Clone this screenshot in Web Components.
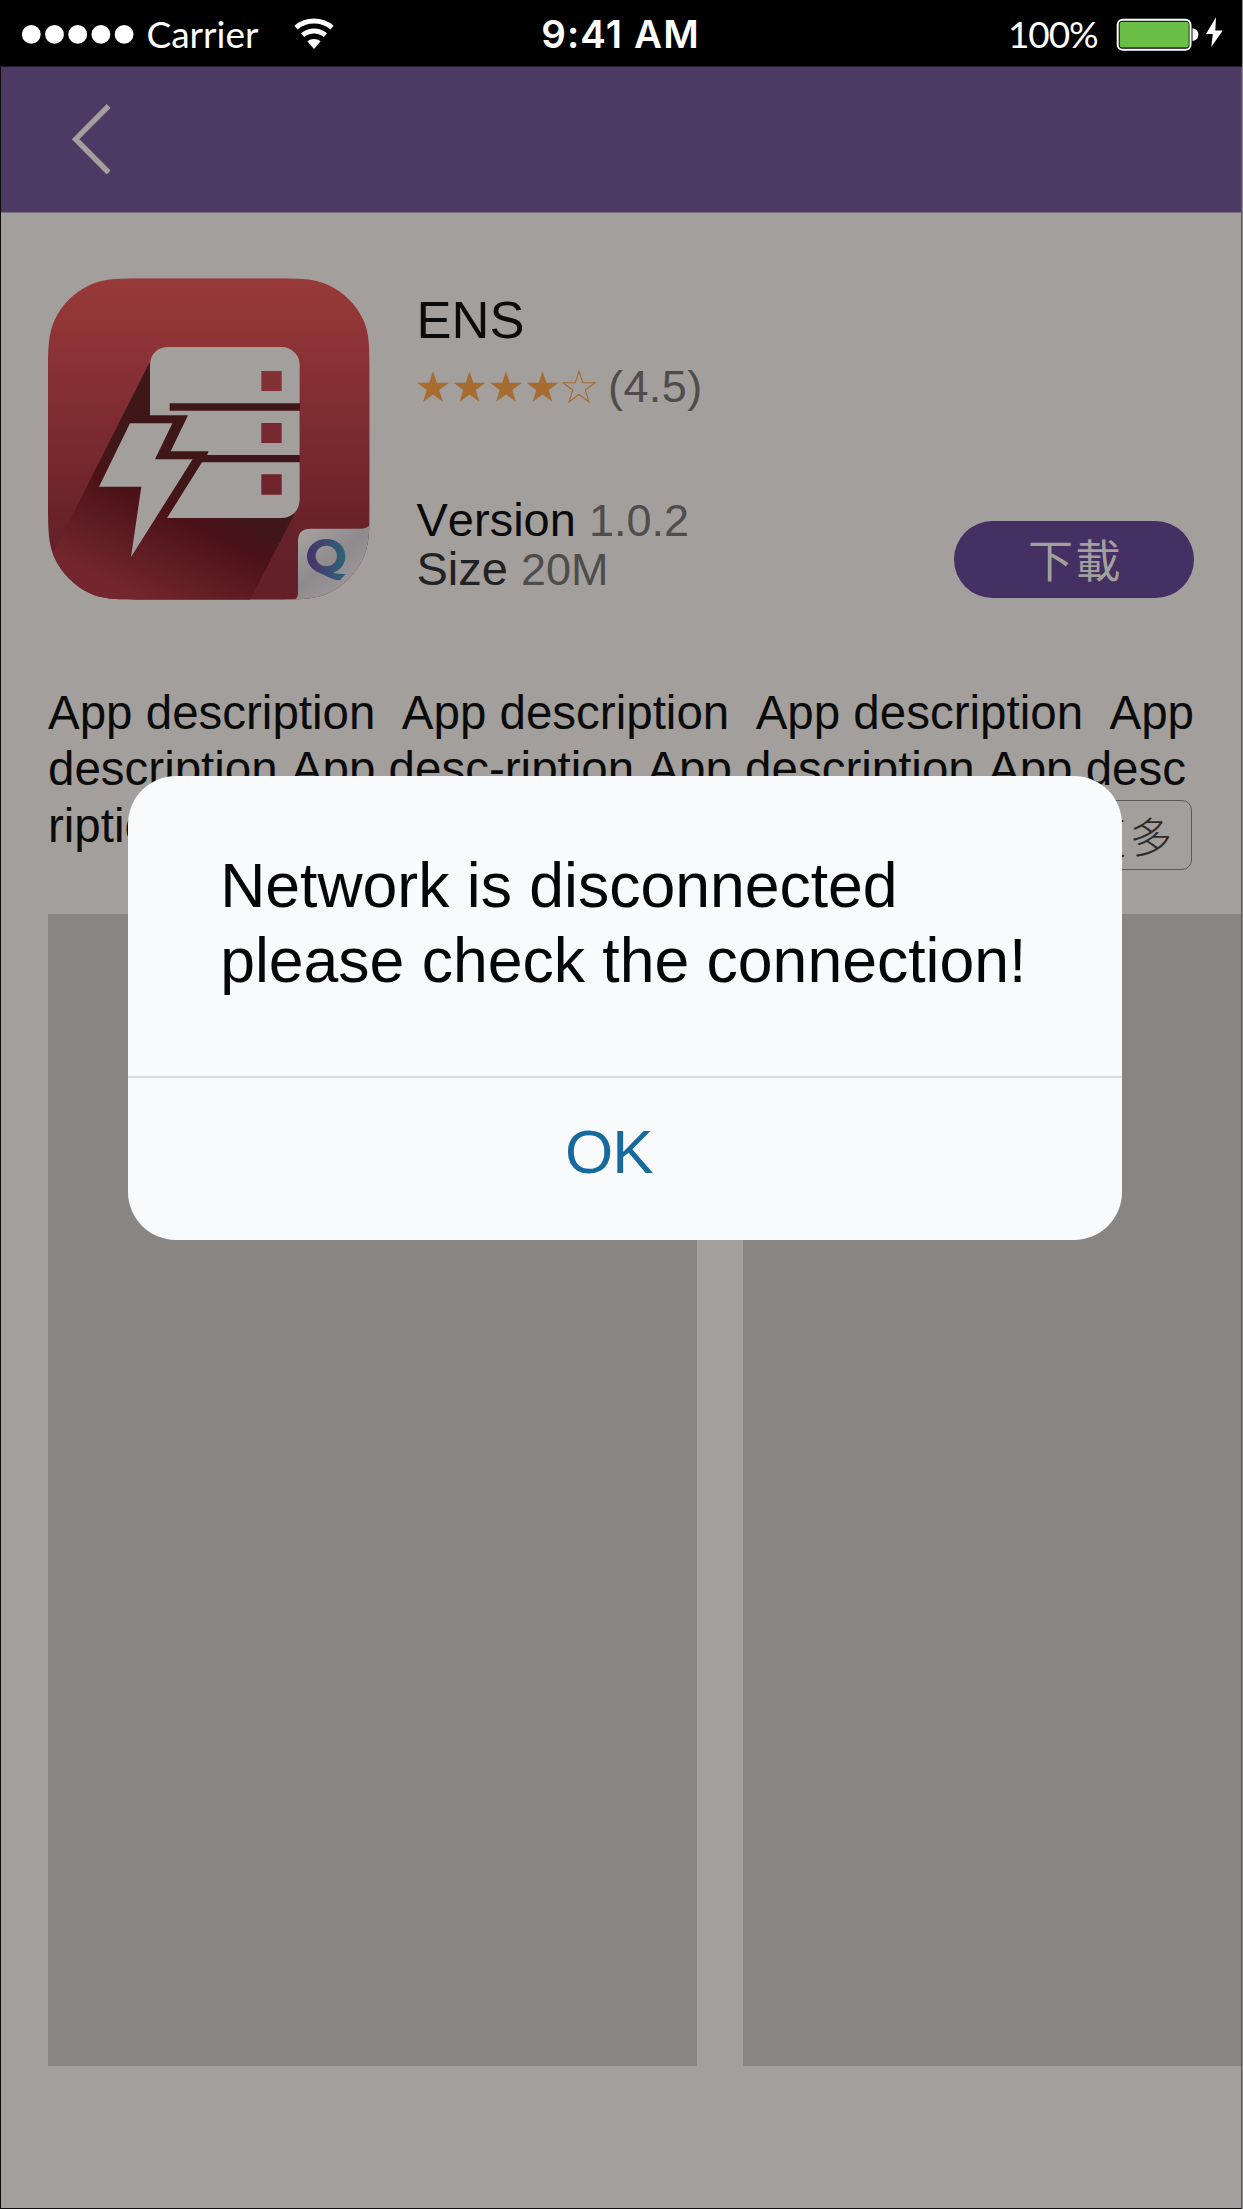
<!DOCTYPE html>
<html lang="zh-Hant">
<head>
<meta charset="utf-8">
<title>ENS</title>
<style>
html,body{margin:0;padding:0;background:#8b8989}
body{font-family:"Liberation Sans",Arial,sans-serif;overflow:hidden}
</style>
</head>
<body>
<app-screen>
  <status-bar slot="status" carrier="Carrier" time="9:41 AM" battery="100%"></status-bar>
  <nav-bar slot="nav"></nav-bar>
  <app-summary name="ENS" rating="(4.5)" version="1.0.2" size="20M">
    <app-icon slot="icon"></app-icon>
    <pill-button slot="action">下載</pill-button>
  </app-summary>
  <app-description>
    <span>App description&nbsp; App description&nbsp; App description&nbsp; App</span>
    <span>description App desc-ription App description App desc</span>
    <span slot="last">ription</span>
    <more-button slot="more">更多</more-button>
  </app-description>
  <shot-gallery></shot-gallery>
  <alert-dialog slot="dialog">
    <span>Network is disconnected<br>please check the connection!</span>
    <span slot="action">OK</span>
  </alert-dialog>
</app-screen>
<script>
const define = (name, html, setup) => customElements.define(name, class extends HTMLElement {
  constructor() {
    super();
    this.attachShadow({mode: 'open'}).innerHTML = html;
  }
  connectedCallback() { if (setup) setup(this, this.shadowRoot); }
});
const fill = (host, root, keys) => keys.forEach(k => { root.getElementById(k).textContent = host.getAttribute(k); });

define('app-screen', `
<style>
:host{display:flex;flex-direction:column;position:relative;width:1242px;height:2209px;box-sizing:border-box;background:#a29f9d;overflow:hidden}
main{flex:1;display:flex;flex-direction:column;border:solid #0d0b0c;border-width:0 1px 1px 1px;border-right-color:#5b5959;box-sizing:border-box}
</style>
<slot name="status"></slot>
<main><slot name="nav"></slot><slot></slot></main>
<slot name="dialog"></slot>`);

define('status-bar', `
<style>
:host{display:flex;height:66px;background:#000;color:#fff;border-bottom:1px solid #221b2e;flex:none}
.side{flex:1;display:flex;align-items:center}
.left{padding-left:22px}
.right{justify-content:flex-end;padding-right:19px}
span{white-space:nowrap}
.sys{font:37px/66px Lato,"Open Sans",sans-serif}
#carrier{margin-left:12.5px;letter-spacing:0;width:110px;padding-top:1px}
#battery{width:90px;margin-right:18px;letter-spacing:-1.1px;padding-top:2px}
#time{font:600 38.5px/66px Inter,sans-serif;letter-spacing:1.1px;padding-top:1px;margin-right:4px}
svg{display:block;flex:none}
.wifi{margin-left:37.5px}
</style>
<div class="side left">
<svg width="112" height="66" viewBox="22 0 112 66" fill="#fff"><circle cx="31.3" cy="34.4" r="9.4"/><circle cx="54.5" cy="34.4" r="9.4"/><circle cx="77.7" cy="34.4" r="9.4"/><circle cx="100.9" cy="34.4" r="9.4"/><circle cx="124.1" cy="34.4" r="9.4"/></svg>
<span id="carrier" class="sys"></span>
<svg class="wifi" width="40" height="66" viewBox="294.3 0 40 66" fill="none" stroke="#fff" stroke-width="4.9"><path d="M296.3 27.6A28 28 0 0 1 332.3 27.6M302.9 35.2A17.6 17.6 0 0 1 325.7 35.2"/><path d="M314.3 48.9L307.7 41.3A10.2 10.2 0 0 1 320.9 41.3Z" fill="#fff" stroke="none"/></svg>
</div>
<span id="time"></span>
<div class="side right">
<span id="battery" class="sys"></span>
<svg width="107" height="66" viewBox="1116 0 107 66"><rect x="1117.7" y="19.7" width="72.8" height="30" rx="5" fill="#000" stroke="#fff" stroke-width="2"/><rect x="1119.7" y="21.8" width="69" height="25.6" rx="2.5" fill="#69be45"/><path d="M1192.5 28.2Q1198.4 29 1198.4 34.6T1192.5 41Z" fill="#fff"/><path d="M1216 17.2L1206 34H1212.8L1211.3 47L1222.8 30.4H1215.3Z" fill="#fff"/></svg>
</div>`, (h, r) => fill(h, r, ['carrier', 'time', 'battery']));

define('nav-bar', `
<style>:host{display:flex;align-items:flex-start;height:145px;flex:none;background:#4c3a65;padding-left:70px;border-bottom:1px solid #7e7386}svg{margin-top:34px}</style>
<svg width="42" height="78" viewBox="71 101 42 78" fill="none" stroke="#a29f9d" stroke-width="5.4"><path d="M108.6 106L75.6 139.2L108.6 172.5"/></svg>`);

define('app-icon', `
<style>:host,svg{display:block;width:322px;height:322px}</style>
<svg viewBox="54 54 966 966">
<defs>
<linearGradient id="bg" gradientUnits="userSpaceOnUse" x1="0" y1="54" x2="0" y2="1019"><stop offset="0" stop-color="#983939"/><stop offset=".1" stop-color="#943637"/><stop offset=".8" stop-color="#66212a"/><stop offset="1" stop-color="#642029"/></linearGradient>
<linearGradient id="sh" gradientUnits="userSpaceOnUse" x1="0" y1="0" x2="-450" y2="890"><stop offset=".4" stop-color="#401719"/><stop offset=".49" stop-color="#4b1218"/><stop offset=".76" stop-color="#73262f"/></linearGradient>
<linearGradient id="fold" gradientUnits="userSpaceOnUse" x1="810" y1="810" x2="960" y2="990"><stop offset=".1" stop-color="#a19e9d"/><stop offset=".55" stop-color="#8f8b8d"/><stop offset="1" stop-color="#9b989b"/></linearGradient>
<linearGradient id="q"><stop offset="0" stop-color="#45326a"/><stop offset=".5" stop-color="#3d4a75"/><stop offset="1" stop-color="#2d6374"/></linearGradient>
<clipPath id="c"><path d="M54 330C54 250 58 215 75 178C95 135 135 95 178 76C215 58 250 55 330 55H744C824 55 859 58 896 76C939 95 979 135 999 178C1016 215 1019 250 1019 330V744C1019 824 1016 859 999 896C979 939 939 979 896 999C859 1016 824 1019 744 1019H330C250 1019 215 1016 178 999C135 979 95 939 75 896C58 859 54 824 54 744Z"/></clipPath>
</defs>
<g clip-path="url(#c)">
<path d="M54 54H1020V1020H54Z" fill="url(#bg)"/>
<path d="M358 308L60 898V1020H660L792 765L810 430Z" fill="url(#sh)"/>
<path d="M400 420H809V620H420L300 600V450Z" fill="#401719"/>
<g fill="#a29f9d">
<path d="M360 315Q360 289 376 275Q391 261 415 261H754Q777 261 793 277Q809 292 809 315V430H419V452H809V585H531L536 574H422L474 466H360Z"/>
<path d="M516 607H809V720Q809 743 793 759Q777 774 754 774H411Z"/>
<path d="M300 490H427L375 598H488L303 891L334 680H207Z"/>
</g>
<path d="M694 333H755V393H694Z" fill="#823034"/><path d="M694 489H755V549H694Z" fill="#772830"/><path d="M694 643H755V704H694Z" fill="#6d242c"/>
<path d="M1020 795Q1010 806 992 806H841Q804 806 804 843V995Q804 1013 793 1020H1020Z" fill="url(#fold)"/>
</g>
<path fill-rule="evenodd" fill="url(#q)" d="M889 837C922 837 946 860 946 889C946 913 931 931 910 938C921 942 934 941 947 942L930 961C901 958 890 947 868 938C846 930 831 912 831 889C831 860 856 837 889 837ZM889 857C871 857 857 871 857 888S871 919 889 919S921 905 921 888S907 857 889 857Z"/>
</svg>`);

define('pill-button', `
<style>:host{display:flex;justify-content:center;align-items:center;width:240.5px;height:76.5px;border-radius:39px;background:#443062;color:#a29f9d;font:45px/60px "Noto Sans CJK TC",sans-serif;letter-spacing:2.5px;box-sizing:border-box;padding-left:3px}</style>
<slot></slot>`);

define('app-summary', `
<style>
:host{display:flex;padding:65px 46.8px 0 47px;height:322px;flex:none;color:#0c0b0b}
.info{flex:1;margin-left:46.5px;display:flex;flex-direction:column;padding-top:11.8px}
#name{font-size:52.5px;line-height:60px}
.rate{display:flex;margin-top:12.6px;height:50px;font-size:45px;line-height:50px;color:#4f4d4c;letter-spacing:.4px}
.rate svg{margin-top:6px;margin-right:8.5px;margin-left:-1px}
.meta{margin-top:83.3px;font-size:47px;line-height:48px;white-space:nowrap;font-kerning:none}
b{font-weight:400;font-size:45px;color:#4f4d4c}
.s{color:#222}
.action{display:flex;align-items:flex-start;padding-top:243px}
</style>
<slot name="icon"></slot>
<div class="info">
<div id="name"></div>
<div class="rate"><svg width="184" height="38" viewBox="415 368 184 38"><defs><path id="st" d="M0-16.8L3.8-5.2H16L6.2 2L9.9 13.8L0 6.5L-9.9 13.8L-6.2 2L-16-5.2H-3.8Z"/></defs><g fill="#a66c30"><use href="#st" x="432" y="388"/><use href="#st" x="468.5" y="388"/><use href="#st" x="505" y="388"/><use href="#st" x="541.5" y="388"/></g><use href="#st" x="578" y="388" fill="none" stroke="#a66c30" stroke-width="1.1"/></svg><span id="rating"></span></div>
<div class="meta"><div>Version <b id="version"></b></div><div class="s">Size <b id="size"></b></div></div>
</div>
<div class="action"><slot name="action"></slot></div>`, (h, r) => fill(h, r, ['name', 'rating', 'version', 'size']));

define('app-description', `
<style>
:host{display:flex;flex-direction:column;height:229px;margin-top:85px;padding:0 49px 0 47px;flex:none;color:#0c0b0b;font-size:47.5px;line-height:56.4px;font-kerning:none}
::slotted(span){white-space:nowrap;display:block}
.last{display:flex;justify-content:space-between;align-items:flex-start}
.more{padding-top:1.7px}
</style>
<slot></slot><div class="last"><slot name="last"></slot><div class="more"><slot name="more"></slot></div></div>`);

define('more-button', `
<style>:host{display:flex;align-items:center;justify-content:center;width:124px;height:70px;box-sizing:border-box;border:1.5px solid #5c5a59;border-radius:10px;color:#2c2b2b;font:300 42px/60px "Noto Sans CJK TC",sans-serif;letter-spacing:4px}</style>
<slot></slot>`);

define('shot-gallery', `
<style>:host{display:flex;gap:46px;padding-left:47px;height:1152px;flex:none;overflow:hidden}div{flex:none;width:649px;background:#898583}</style>
<div></div><div></div>`);

define('alert-dialog', `
<style>
:host{display:flex;flex-direction:column;position:absolute;left:127.8px;top:775.6px;width:993.9px;height:464px;border-radius:48px;background:#f9fafc;overflow:hidden;color:#050608}
.msg{height:228.4px;padding:72.4px 0 0 92.4px;font-size:62.5px;line-height:74.8px;white-space:nowrap;border-bottom:2px solid #d9dbdd;flex:none}
.act{flex:1;display:flex;justify-content:center;font-size:62px;line-height:70px;letter-spacing:-1px;color:#176a9f;padding:39px 32px 0 0}
</style>
<div class="msg"><slot></slot></div><div class="act"><slot name="action"></slot></div>`);
</script>
</body>
</html>
